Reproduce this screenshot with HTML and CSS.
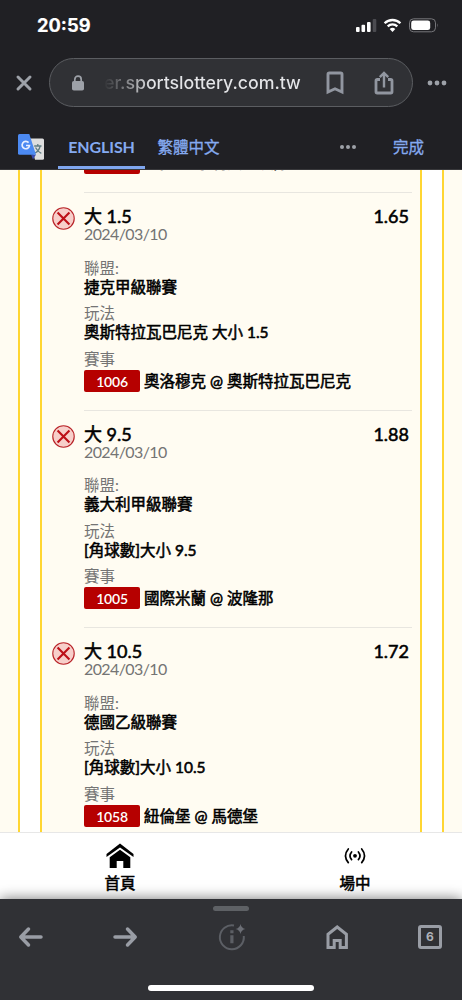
FILE: index.html
```html
<!DOCTYPE html>
<html lang="zh-Hant">
<head>
<meta charset="utf-8">
<title>sportslottery</title>
<link rel="stylesheet" href="styles.css">
</head>
<body>
<div class="phone">
  <header class="chrome">
    <div class="status">
      <span class="clock">20:59</span>
      <svg class="status-icons" width="84" height="16" viewBox="0 0 84 16">
        <g fill="#fff"><rect x="1" y="9" width="3.6" height="5" rx="1"/><rect x="6.5" y="6.8" width="3.6" height="7.2" rx="1"/><rect x="12" y="4" width="3.6" height="10" rx="1"/></g>
        <rect x="17.7" y="1" width="3.6" height="13" rx="1" fill="#4b4b50"/>
        <g fill="none" stroke="#fff" stroke-width="2.3"><path d="M29.6 5.2a11.3 11.3 0 0 1 15.8 0"/><path d="M32.7 8.3a6.9 6.9 0 0 1 9.6 0"/></g>
        <path d="M34.7 11.1a4.1 4.1 0 0 1 5.6 0L37.5 14z" fill="#fff"/>
        <rect x="54.5" y=".8" width="26" height="13" rx="4" fill="none" stroke="#77777b"/>
        <rect x="56.2" y="2.5" width="19" height="9.6" rx="2.4" fill="#fff"/>
        <path d="M82 5.2q1.5 2 0 4.2z" fill="#77777b"/>
      </svg>
    </div>
    <div class="address">
      <svg class="close" width="18" height="18" viewBox="0 0 18 18"><path d="M3 3l12 12M15 3L3 15" stroke="#9da1a8" stroke-width="3" stroke-linecap="round"/></svg>
      <div class="pill">
        <svg class="lock" width="12" height="16" viewBox="0 0 12 16"><rect y="6" width="12" height="9.5" rx="1.8" fill="#9da1a8"/><path d="M2.8 7V4.4a3.2 3.2 0 0 1 6.4 0V7" fill="none" stroke="#9da1a8" stroke-width="1.7"/></svg>
        <span class="url">er.sportslottery.com.tw</span>
        <svg class="bookmark" width="18" height="24" viewBox="0 0 18 24"><path d="M2 3.4Q2 2 3.4 2h11.2Q16 2 16 3.4V21l-7-3.2L2 21z" fill="none" stroke="#9196a0" stroke-width="2.9"/></svg>
        <svg class="share" width="20" height="24" viewBox="0 0 20 24"><g fill="none" stroke="#9196a0" stroke-width="2.8"><path d="M6 8.5H3.2Q2 8.5 2 9.7v11Q2 22 3.2 22h13.6q1.2 0 1.2-1.3v-11q0-1.2-1.2-1.2H14"/><path d="M10 16.5V3M5.8 6.2L10 2l4.2 4.2" stroke-width="2.4"/></g></svg>
      </div>
      <svg class="more" width="20" height="6" viewBox="0 0 20 6" fill="#9da1a8"><circle cx="3" cy="3" r="2.4"/><circle cx="10" cy="3" r="2.4"/><circle cx="17" cy="3" r="2.4"/></svg>
    </div>
    <div class="translate">
      <svg class="glogo" width="26" height="26" viewBox="0 0 26 26">
        <path d="M11 4.5h13.5q1.5 0 1.5 1.5v18.3q0 1.5-1.5 1.5H17z" fill="#dedede"/>
        <g fill="none" stroke="#607d83" stroke-width="1.3"><path d="M16.2 12h7.3M19.8 10v2M22.2 12q-1.2 5-5.2 7M17.5 13.5q2 4 5.8 5.8"/></g>
        <path d="M13 20.5h5l-3 5z" fill="#3949ab"/>
        <path d="M1.5 0h9.8l6.7 20.8H1.5Q0 20.8 0 19.3V1.5Q0 0 1.5 0z" fill="#4c8af2"/>
        <path d="M10.6 8.6A3.7 3.7 0 1 0 11.5 11.5H8" fill="none" stroke="#e9f0ff" stroke-width="1.7"/>
      </svg>
      <span class="tab tab-on">ENGLISH</span>
      <span class="tab">繁體中文</span>
      <svg class="dots" width="16" height="6" viewBox="0 0 16 6" fill="#9da1a8"><circle cx="2" cy="3" r="2"/><circle cx="8" cy="3" r="2"/><circle cx="14" cy="3" r="2"/></svg>
      <span class="done">完成</span>
    </div>
  </header>

  <main class="page">
    <div class="frame">
      <div class="slip">
        <div class="match match-cut"><span class="code">1013</span><span class="teams">布拉格 @ 利貝雷茨隊</span></div>

        <section class="bet">
          <svg class="lose" viewBox="0 0 24 24"><circle cx="12" cy="12" r="11.2"/><path d="M5.8 5.8l12.4 12.4M18.2 5.8L5.8 18.2"/></svg>
          <div class="info">
            <div class="head"><span>大 1.5</span><span>1.65</span></div>
            <div class="date">2024/03/10</div>
            <div class="label first">聯盟:</div><div class="value">捷克甲級聯賽</div>
            <div class="label">玩法</div><div class="value">奧斯特拉瓦巴尼克 大小 1.5</div>
            <div class="label">賽事</div>
            <div class="match"><span class="code">1006</span><span class="teams">奧洛穆克 @ 奧斯特拉瓦巴尼克</span></div>
          </div>
        </section>

        <section class="bet">
          <svg class="lose" viewBox="0 0 24 24"><circle cx="12" cy="12" r="11.2"/><path d="M5.8 5.8l12.4 12.4M18.2 5.8L5.8 18.2"/></svg>
          <div class="info">
            <div class="head"><span>大 9.5</span><span>1.88</span></div>
            <div class="date">2024/03/10</div>
            <div class="label first">聯盟:</div><div class="value">義大利甲級聯賽</div>
            <div class="label">玩法</div><div class="value">[角球數]大小 9.5</div>
            <div class="label">賽事</div>
            <div class="match"><span class="code">1005</span><span class="teams">國際米蘭 @ 波隆那</span></div>
          </div>
        </section>

        <section class="bet">
          <svg class="lose" viewBox="0 0 24 24"><circle cx="12" cy="12" r="11.2"/><path d="M5.8 5.8l12.4 12.4M18.2 5.8L5.8 18.2"/></svg>
          <div class="info">
            <div class="head"><span>大 10.5</span><span>1.72</span></div>
            <div class="date">2024/03/10</div>
            <div class="label first">聯盟:</div><div class="value">德國乙級聯賽</div>
            <div class="label">玩法</div><div class="value">[角球數]大小 10.5</div>
            <div class="label">賽事</div>
            <div class="match"><span class="code">1058</span><span class="teams">紐倫堡 @ 馬德堡</span></div>
          </div>
        </section>
      </div>
    </div>
  </main>

  <nav class="sitenav">
    <a class="navitem">
      <svg width="28" height="26" viewBox="0 0 28 26"><path d="M14 .5L27.5 11v3L14 4.4.5 14v-3z"/><path d="M14 6.8l10.3 7.4V25h-7v-7h-6.6v7h-7V14.2z"/></svg>
      <span>首頁</span>
    </a>
    <a class="navitem">
      <svg width="28" height="26" viewBox="0 0 28 26"><circle cx="14" cy="12.8" r="1.9"/><g fill="none" stroke="#000" stroke-width="1.7" stroke-linecap="round"><path d="M10.6 9q-3.2 3.8 0 7.6M17.4 9q3.2 3.8 0 7.6M7.3 6q-5.6 6.8 0 13.6M20.7 6q5.6 6.8 0 13.6"/></g></svg>
      <span>場中</span>
    </a>
  </nav>

  <footer class="toolbar">
    <div class="grip"></div>
    <div class="tools">
      <svg width="26" height="26" viewBox="0 0 26 26"><path d="M23 13H3M10.5 5L2.800 13l7.700 8" fill="none" stroke="#999da5" stroke-width="3.5" stroke-linecap="round" stroke-linejoin="round"/></svg>
      <svg width="26" height="26" viewBox="0 0 26 26"><path d="M3 13h20M15.5 5l7.700 8-7.700 8" fill="none" stroke="#999da5" stroke-width="3.5" stroke-linecap="round" stroke-linejoin="round"/></svg>
      <svg width="28" height="28" viewBox="0 0 28 28"><path d="M16 2.4A12 12 0 1 0 25.8 13" fill="none" stroke="#5c5f65" stroke-width="2"/><path d="M12.3 7.2h3.2v3h-3.2zM12.3 12.2h3.2v8h-3.2z" fill="#5c5f65"/><path d="M22.5 1q.8 4.2 5 5-4.2.8-5 5-.8-4.2-5-5 4.2-.8 5-5z" fill="#6b6e75"/></svg>
      <svg width="26" height="26" viewBox="0 0 26 26"><path d="M4 23.5V10.3L13.2 3l9.2 7.3v13.2h-6.2v-7h-6v7z" fill="none" stroke="#999da5" stroke-width="3"/></svg>
      <span class="tabs">6</span>
    </div>
    <div class="homebar"></div>
  </footer>
</div>
</body>
</html>
```
FILE: styles.css
```css
* { box-sizing: border-box; }
body { margin: 0; background: #202024; }
.phone {
  width: 462px; height: 1000px; overflow: hidden;
  display: flex; flex-direction: column;
  font-family: Lato, "Noto Sans CJK TC", sans-serif;
}
svg { display: block; flex: none; }

/* Browser chrome */
.chrome { height: 170px; flex: none; background: #202024; font-family: Inter, "Noto Sans CJK TC", sans-serif; border-bottom: 1px solid #38383b; }
.status { height: 58px; padding: 15px 24px 0 37px; display: flex; justify-content: space-between; align-items: flex-start; }
.clock { color: #fff; font-size: 18.3px; line-height: 21px; font-weight: 700; -webkit-text-stroke: .2px #fff; }
.status-icons { margin: 3px -1px 0 0; }
.address { height: 49px; display: flex; align-items: center; padding-left: 15px; }
.pill {
  width: 364px; height: 49px; margin: 0 14px 0 16px; padding-left: 22px;
  border: 1px solid #5b5d61; border-radius: 25px; background: #303135;
  display: flex; align-items: center;
}
.url {
  width: 200px; margin-left: 20px; font-size: 17.8px; line-height: 24px; font-weight: 500; white-space: nowrap; letter-spacing: -.05px;
  color: transparent; background: linear-gradient(90deg, #303135, #e4e5e8 48px); background-clip: text; -webkit-background-clip: text;
}
.bookmark { margin-left: 22px; }
.share { margin-left: 30px; }
.translate { height: 62px; display: flex; align-items: center; padding-left: 18px; }
.glogo { margin-top: 18px; }
.tab { height: 37px; margin-top: 25px; padding: 0 10px; color: #85aaf0; font-size: 15.5px; line-height: 31px; font-weight: 400; -webkit-text-stroke: .3px #85aaf0; }
.tab-on { width: 87px; margin-left: 14px; padding: 0; text-align: center; border-bottom: 3px solid #7fa6ee; font-family: Lato, sans-serif; font-size: 16px; line-height: 29px; font-weight: 700; letter-spacing: -.1px; -webkit-text-stroke: 0; }
.tab + .tab { margin-left: 2.5px; }
.dots { margin: 18px 0 0 110.5px; }
.done { margin: 19px 0 0 37px; color: #85aaf0; font-size: 15.5px; line-height: 24px; -webkit-text-stroke: .3px #85aaf0; }

/* Bet slip */
.page { height: 662px; flex: none; padding: 0 18px; background: #fffcf2; overflow: hidden; }
.frame { height: 100%; padding: 0 20px; background: #fff; border: solid #ffd633; border-width: 0 2px; }
.slip { display: flow-root; height: 100%; padding: 0 8px 0 10px; background: #fffcf2; border: solid #ffd633; border-width: 0 2.5px; }
.match { display: flex; align-items: center; height: 22px; margin-top: 1px; }
.match-cut { margin: -18px 0 18px 32px; }
.match-cut .teams { line-height: 18px; padding-bottom: 2px; }
.bet { display: flex; height: 217.5px; }
.lose { width: 23px; height: 23px; margin: 15px 9px 0 0; }
.lose circle { fill: #f7cfca; stroke: #b9252a; stroke-width: 1.2; }
.lose path { stroke: #bd1018; stroke-width: 2.2; }
.info { width: 328px; border-top: 1.5px solid #e8e6e0; padding-top: 13px; }
.head, .value, .teams, .navitem { color: #000; font-weight: 400; -webkit-text-stroke: .55px #000; }
.head { display: flex; justify-content: space-between; padding-right: 3px; height: 19px; line-height: 20px; font-size: 18px; }
.date { height: 19px; font-size: 16px; line-height: 18px; letter-spacing: -.6px; color: #747474; }
.label { height: 19px; margin-top: 7.5px; font-size: 15.5px; line-height: 19px; color: #747474; }
.label.first { margin-top: 14.5px; }
.value { height: 19px; font-size: 15.5px; line-height: 19px; white-space: nowrap; }
.code { width: 56px; height: 22px; margin-right: 4px; border-radius: 2px; background: #b60000; color: #fff; font-size: 14px; line-height: 23px; font-weight: 600; text-align: center; letter-spacing: -.2px; }
.teams { font-size: 15.5px; line-height: 22px; white-space: nowrap; }

/* Site navigation */
.sitenav { height: 67px; flex: none; display: flex; padding: 10px 0 0 2.5px; background: #fff; border-top: 1px solid #e7e7e7; }
.navitem { width: 235px; flex: none; display: flex; flex-direction: column; align-items: center; font-size: 15.5px; line-height: 28px; }

/* Browser toolbar */
.toolbar { height: 101px; flex: none; position: relative; background: #303135; box-shadow: 0 0 13px rgba(0,0,0,.55); display: flex; flex-direction: column; align-items: center; }
.grip { width: 36px; height: 4.5px; margin-top: 7px; border-radius: 3px; background: #5e6165; }
.tools { width: 100%; height: 28px; margin-top: 12.5px; padding-left: 18px; display: grid; grid-template-columns: 94px 106px 106px 94px 24px; align-items: center; }
.tabs { width: 24px; height: 24px; border: 3px solid #999da5; border-radius: 3px; color: #aeb2b9; font: 700 12px/18px Inter, sans-serif; text-align: center; }
.homebar { width: 166px; height: 6px; margin-top: 34px; border-radius: 3px; background: #fff; }
```
